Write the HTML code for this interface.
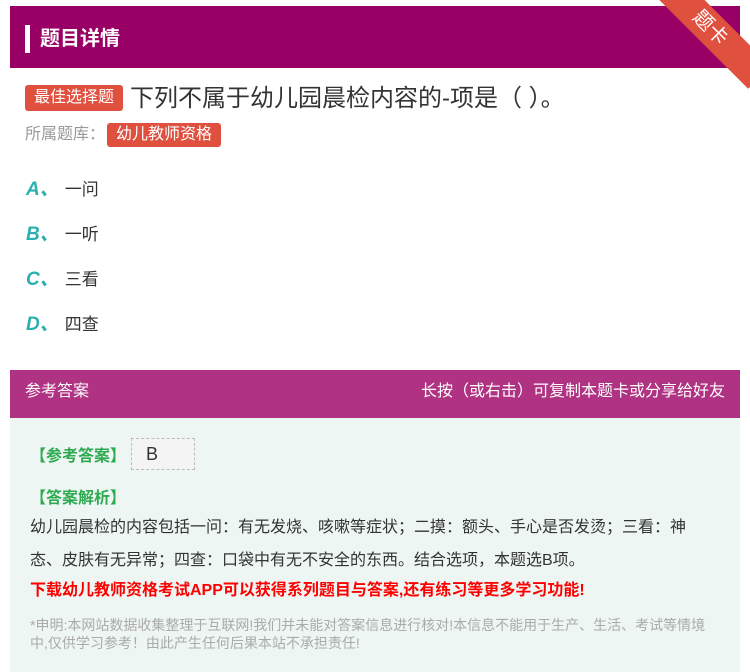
<!DOCTYPE html>
<html><head><meta charset="utf-8"><style>
*{margin:0;padding:0;box-sizing:border-box}
body{width:750px;height:672px;background:#fff;font-family:"Liberation Sans","Noto Sans CJK SC",sans-serif;position:relative;overflow:hidden}
.hdr{position:absolute;left:10px;top:6px;width:730px;height:62px;background:#990066}
.hdr .bar{position:absolute;left:15px;top:19px;width:5px;height:28px;background:#fff}
.hdr .t{position:absolute;left:30px;top:16px;color:#fff;font-size:20px;font-weight:bold}
.rib{position:absolute;right:-30px;top:12px;width:140px;height:32px;background:#e0503f;transform:rotate(45deg);color:#fff;font-size:20px;text-align:center;line-height:32px}
.q{position:absolute;left:25px;top:78px;font-size:24px;color:#333}
.tag{display:inline-block;background:#e0503f;color:#fff;font-size:16px;border-radius:3px;padding:0 9px;height:26px;line-height:26px;vertical-align:4px;margin-right:7px}
.lib{position:absolute;left:25px;top:120px;font-size:16px;color:#999}
.lib .tag{font-size:16px;height:24px;line-height:24px;vertical-align:0;margin-left:2px}
.opt{position:absolute;left:26px;font-size:17px;color:#333}
.opt b{color:#2ab0b0;font-style:italic;font-size:19px;margin-right:6px}
.ans{position:absolute;left:10px;top:370px;width:730px;height:302px;background:#eef6f4}
.ah{height:48px;background:#b03282;color:#fff;font-size:16px;line-height:44px;padding:0 15px}
.ah span{float:right}
.g{position:absolute;left:20px;color:#2eaa50;font-size:16px;font-weight:bold}
.txt{position:absolute;left:20px;top:141px;width:680px;font-size:16px;color:#333;line-height:33px}
.red{position:absolute;left:20px;top:206px;color:#f00;font-size:16px;font-weight:bold}
.note{position:absolute;left:20px;top:246px;width:690px;color:#aaa;font-size:14px;line-height:18px}
.bimg{position:absolute;left:121px;top:68px;width:64px;height:32px;background:#f4f4f4;border:1px dashed #bbb;font-size:18px;color:#333;padding-left:14px;line-height:30px}
</style></head><body>
<div class="hdr"><div class="bar"></div><div class="t">题目详情</div></div>
<div class="rib">题卡</div>
<div class="q"><span class="tag">最佳选择题</span>下列不属于幼儿园晨检内容的-项是（ ）。</div>
<div class="lib">所属题库：<span class="tag">幼儿教师资格</span></div>
<div class="opt" style="top:174px"><b>A、</b>一问</div>
<div class="opt" style="top:219px"><b>B、</b>一听</div>
<div class="opt" style="top:264px"><b>C、</b>三看</div>
<div class="opt" style="top:309px"><b>D、</b>四查</div>
<div class="ans">
<div class="ah">参考答案<span>长按（或右击）可复制本题卡或分享给好友</span></div>
<div class="g" style="top:72px">【参考答案】</div>
<div class="bimg">B</div>
<div class="g" style="top:114px">【答案解析】</div>
<div class="txt">幼儿园晨检的内容包括一问：有无发烧、咳嗽等症状；二摸：额头、手心是否发烫；三看：神态、皮肤有无异常；四查：口袋中有无不安全的东西。结合选项，本题选B项。</div>
<div class="red">下载幼儿教师资格考试APP可以获得系列题目与答案,还有练习等更多学习功能!</div>
<div class="note">*申明:本网站数据收集整理于互联网!我们并未能对答案信息进行核对!本信息不能用于生产、生活、考试等情境中,仅供学习参考！由此产生任何后果本站不承担责任!</div>
</div>
</body></html>
